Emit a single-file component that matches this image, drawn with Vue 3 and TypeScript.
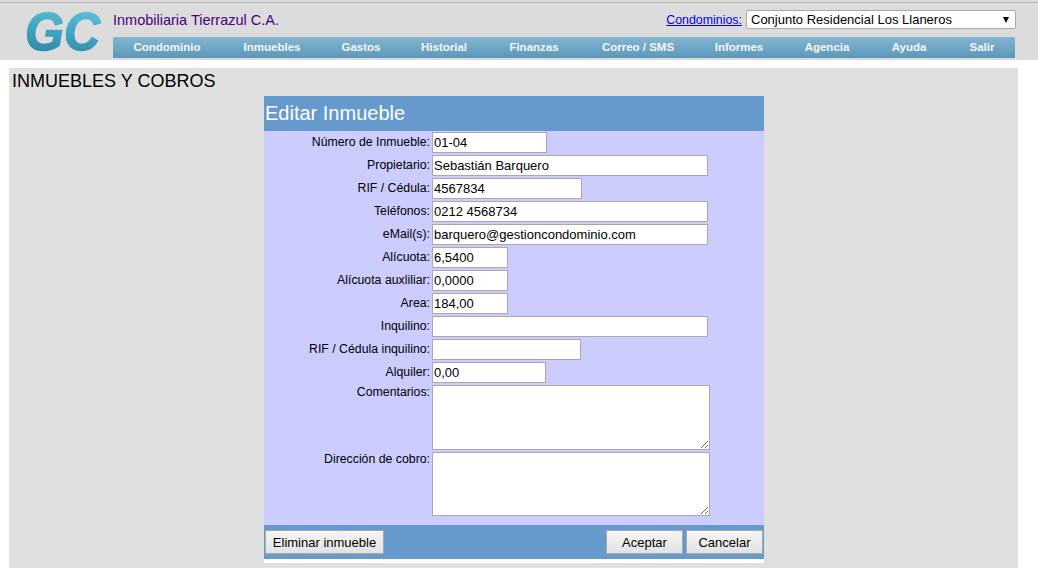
<script setup lang="ts">
const nav = [
  { t: 'Condominio', w: 108 },
  { t: 'Inmuebles', w: 102 },
  { t: 'Gastos', w: 76 },
  { t: 'Historial', w: 90 },
  { t: 'Finanzas', w: 90 },
  { t: 'Correo / SMS', w: 118 },
  { t: 'Informes', w: 84 },
  { t: 'Agencia', w: 92 },
  { t: 'Ayuda', w: 72 },
  { t: 'Salir', w: 74 },
]
const rows = [
  { l: 'Número de Inmueble:', v: '01-04', w: 115 },
  { l: 'Propietario:', v: 'Sebastián Barquero', w: 276 },
  { l: 'RIF / Cédula:', v: '4567834', w: 150 },
  { l: 'Teléfonos:', v: '0212 4568734', w: 276 },
  { l: 'eMail(s):', v: 'barquero@gestioncondominio.com', w: 276 },
  { l: 'Alícuota:', v: '6,5400', w: 76 },
  { l: 'Alícuota auxliliar:', v: '0,0000', w: 76 },
  { l: 'Area:', v: '184,00', w: 76 },
  { l: 'Inquilino:', v: '', w: 276 },
  { l: 'RIF / Cédula inquilino:', v: '', w: 149 },
  { l: 'Alquiler:', v: '0,00', w: 114 },
]
</script>

<template>
  <div class="page">
    <header class="top">
      <div class="logo">
        <svg width="88" height="62" viewBox="0 0 88 62">
          <defs>
            <linearGradient id="lg" x1="0.6" y1="0" x2="0.4" y2="1">
              <stop offset="0" stop-color="#62c6dc" />
              <stop offset="0.55" stop-color="#3fa3c0" />
              <stop offset="1" stop-color="#2c7f9e" />
            </linearGradient>
          </defs>
          <text x="1" y="48" class="logo-text" fill="url(#lg)" stroke="url(#lg)" stroke-width="1.5" textLength="75" lengthAdjust="spacingAndGlyphs">GC</text>
        </svg>
      </div>
      <div class="top-main">
        <div class="top-row">
          <span class="company">Inmobiliaria Tierrazul C.A.</span>
          <div class="condo">
            <a class="condo-link" href="#">Condominios:</a>
            <div class="condo-select">
              <span>Conjunto Residencial Los Llaneros</span>
              <i class="arrow"></i>
            </div>
          </div>
        </div>
        <nav class="nav">
          <a v-for="n in nav" :key="n.t" class="nav-item" :style="{ width: n.w + 'px' }">{{ n.t }}</a>
        </nav>
      </div>
    </header>
    <main class="content">
      <h1 class="title">INMUEBLES Y COBROS</h1>
      <section class="card">
        <h2 class="card-head">Editar Inmueble</h2>
        <div class="card-body">
          <div v-for="r in rows" :key="r.l" class="row">
            <label class="lbl">{{ r.l }}</label>
            <input class="field" :value="r.v" :style="{ width: r.w + 'px' }" />
          </div>
          <div class="row area-row first">
            <label class="lbl">Comentarios:</label>
            <textarea class="area"></textarea>
          </div>
          <div class="row area-row second">
            <label class="lbl">Dirección de cobro:</label>
            <textarea class="area short"></textarea>
          </div>
        </div>
        <div class="card-foot">
          <button class="btn del">Eliminar inmueble</button>
          <div class="right">
            <button class="btn ok">Aceptar</button>
            <button class="btn ok">Cancelar</button>
          </div>
        </div>
      </section>
    </main>
  </div>
</template>

<style>
html, body { margin: 0; background: #fff; overflow: hidden; }
</style>

<style scoped>
.page {
  width: 1038px;
  height: 568px;
  overflow: hidden;
  font-family: "Liberation Sans", Arial, sans-serif;
  background: #fff;
  color: #000;
}
.top {
  height: 58px;
  border-top: 2px solid #dcdcdc;
  box-shadow: inset 0 1px 0 #b4b4b4;
  background: #dcdcdc;
  display: flex;
}
.logo {
  width: 113px;
  flex: none;
  padding: 0 0 0 24px;
  box-sizing: border-box;
}
.logo svg { display: block; }
.logo-text {
  font-family: "Liberation Sans", sans-serif;
  font-weight: 700;
  font-style: italic;
  font-size: 54px;
}
.top-main { width: 902px; flex: none; }
.top-row {
  height: 35px;
  display: flex;
  justify-content: space-between;
  align-items: flex-start;
}
.company {
  font-size: 14.5px;
  color: #4b0082;
  margin-top: 10px;
  line-height: 17px;
}
.condo {
  display: flex;
  align-items: center;
  margin: 8px -1px 0 0;
}
.condo-link {
  font-size: 12.4px;
  color: #0000ee;
  text-decoration: underline;
  margin-right: 4px;
}
.condo-select {
  width: 264px;
  height: 17px;
  background: #fff;
  border: 1px solid #a9a9a9;
  border-radius: 2px;
  font-size: 13px;
  line-height: 17px;
  padding-left: 4px;
  display: flex;
  justify-content: space-between;
  align-items: center;
}
.arrow {
  width: 0;
  height: 0;
  border-left: 3.5px solid transparent;
  border-right: 3.5px solid transparent;
  border-top: 6px solid #000;
  margin-right: 6px;
}
.nav {
  height: 21px;
  background: linear-gradient(#85b5d0, #5b98bb);
  display: flex;
  width: 902px;
}
.nav-item {
  display: block;
  text-align: center;
  color: #f4f8fb;
  font-size: 11.5px;
  font-weight: 700;
  line-height: 20px;
  flex: none;
}
.content {
  margin: 8px 0 0 9px;
  width: 1009px;
  height: 500px;
  background: #e0e0e0;
}
.title {
  margin: 0;
  padding: 3px 0 0 3px;
  height: 28px;
  box-sizing: border-box;
  font-size: 18px;
  line-height: 21px;
  font-weight: 400;
}
.card {
  width: 500px;
  margin-left: 255px;
  background: #fff;
  padding-bottom: 4px;
}
.card-head {
  margin: 0;
  height: 35px;
  background: #6699cc;
  color: #fff;
  font-size: 20px;
  font-weight: 400;
  line-height: 35px;
  padding-left: 1px;
}
.card-body {
  background: #ccccff;
  height: 394px;
  padding-top: 1px;
  box-sizing: border-box;
}
.row {
  display: flex;
  height: 23px;
}
.lbl {
  width: 166px;
  margin-right: 2px;
  flex: none;
  text-align: right;
  font-size: 12.3px;
  line-height: 21px;
}
.field {
  height: 21px;
  box-sizing: border-box;
  border: 1px solid #a9a9a9;
  padding: 1px;
  font: 13px "Liberation Sans", Arial, sans-serif;
  color: #000;
  background: #fff;
  outline: none;
  margin: 0;
}
.area-row.first { height: 67px; }
.area-row.second { height: 66px; }
.area-row .lbl { line-height: 15px; }
.area {
  width: 278px;
  height: 65px;
  box-sizing: border-box;
  border: 1px solid #a9a9a9;
  margin: 0;
  padding: 2px;
  background: #fff;
  outline: none;
  display: block;
}
.area.short { height: 64px; }
.card-foot {
  height: 34px;
  background: #6699cc;
  display: flex;
  justify-content: space-between;
  align-items: flex-start;
  padding: 5px 1px 0;
  box-sizing: border-box;
}
.right { display: flex; gap: 3px; }
.btn {
  height: 24px;
  margin: 0;
  padding: 0;
  box-sizing: border-box;
  border: 1px solid #a9a9a9;
  background: linear-gradient(#f6f6f6, #e2e2e2);
  font: 13px "Liberation Sans", Arial, sans-serif;
  color: #000;
}
.del { width: 119px; }
.ok { width: 77px; }
</style>
